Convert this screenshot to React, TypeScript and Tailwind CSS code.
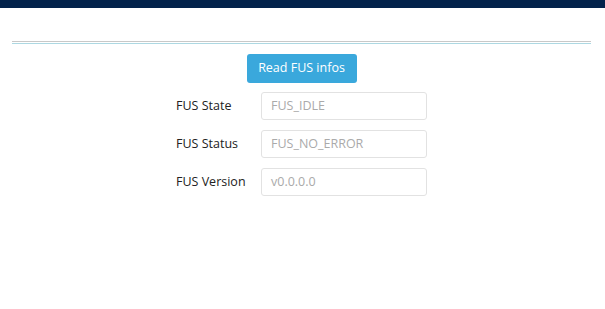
export default function App() {
  const rows = [
    { label: "FUS State", value: "FUS_IDLE" },
    { label: "FUS Status", value: "FUS_NO_ERROR" },
    { label: "FUS Version", value: "v0.0.0.0" },
  ];

  return (
    <div className="w-[605px] h-[309px] bg-white font-['Open_Sans',sans-serif] overflow-hidden">
      {/* top bar */}
      <div className="h-2 bg-[#03234b]" />

      <div className="pl-3 pr-[14px] pt-[33px]">
        <div className="h-px bg-[#c8c8c8]" />
        <div className="h-px mt-px bg-[#add8e2]" />
      </div>

      <div className="flex flex-col items-center pt-[10px] pr-[2px]">
        <button className="w-[110px] h-[29px] rounded-[3px] bg-[#3aa8dc] text-white text-[12.5px] leading-none">
          Read FUS infos
        </button>

        <div className="mt-[9px] flex flex-col gap-[10px] w-[251px]">
          {rows.map((r) => (
            <div key={r.label} className="flex items-center h-[28px]">
              <div className="w-[85px] text-[12.5px] text-[#222]">{r.label}</div>
              <div className="flex-1 h-full flex items-center px-[9px] border border-[#e2e2e2] rounded-[3px] text-[12.5px] text-[#aaa]">
                {r.value}
              </div>
            </div>
          ))}
        </div>
      </div>
    </div>
  );
}
